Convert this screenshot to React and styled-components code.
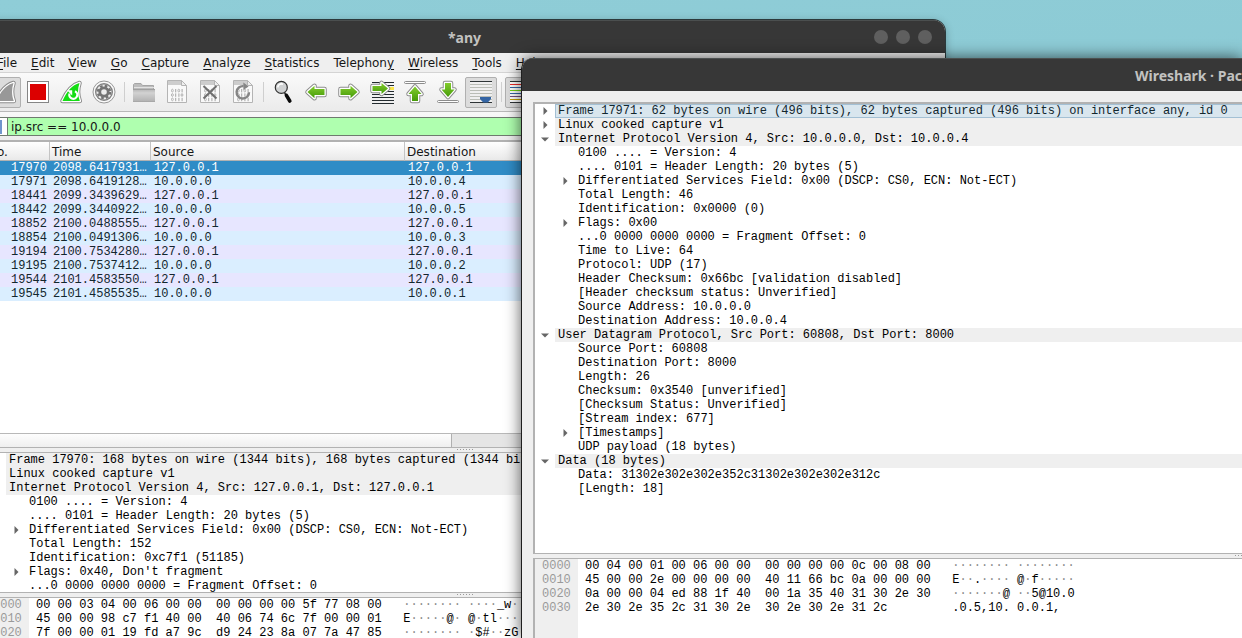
import React from "react";
import styled, { createGlobalStyle, css } from "styled-components";

const UI = `"DejaVu Sans", sans-serif`;
const MONO = `"Liberation Mono", monospace`;

const GlobalStyle = createGlobalStyle`
  * { box-sizing: border-box; }
  body { margin: 0; overflow: hidden; }
  button { font: inherit; color: inherit; margin: 0; padding: 0; border: 0; background: none; }
`;

const Desktop = styled.div`
  position: relative;
  height: 100vh;
  overflow: hidden;
  background: linear-gradient(175deg, #8fcdd7, #84c2ce);
  font: 12px/16px ${UI};
  color: #161616;
`;

const WindowFrame = styled.section`
  position: absolute;
  bottom: 0;
  display: flex;
  flex-direction: column;
  background: #efefef;
  overflow: hidden;
`;

const MainWindow = styled(WindowFrame)`
  top: 20px;
  left: -16px;
  right: 297px;
  border-radius: 12px 12px 0 0;
  box-shadow: 0 0 0 1px #2b3a3c, 0 2px 10px rgba(0, 0, 0, 0.3);
`;

const PacketWindow = styled(WindowFrame)`
  top: 58px;
  left: 521px;
  right: 0;
  border-left: 1px solid #1f1f1f;
  border-radius: 12px 0 0 0;
  box-shadow: 0 0 16px rgba(0, 0, 0, 0.65);
`;

const TitleBar = styled.header`
  position: relative;
  flex: none;
  display: flex;
  align-items: center;
  justify-content: ${(p) => (p.$end ? "flex-end" : "center")};
  height: 33px;
  padding-top: 2px;
  background: #373737;
  border-top: 1px solid #4b4f4f;
`;

const Title = styled.h1`
  margin: 0;
  font: 700 14px/20px "Noto Sans", sans-serif;
  color: #c2c2c0;
  white-space: nowrap;
`;

const WindowButtons = styled.div`
  position: absolute;
  right: 13px;
  top: 9px;
  display: flex;
  gap: 8px;
`;

const WindowButton = styled.button`
  width: 14px;
  height: 14px;
  border-radius: 50%;
  background: #5f5f5f;
`;

const MenuBar = styled.nav`
  flex: none;
  display: flex;
  height: 20px;
  padding-left: 6px;
  border-bottom: 1px solid #d4d4d4;
`;

const MenuItem = styled.button`
  height: 19px;
  padding: 0 7px;
  white-space: nowrap;

  u { text-underline-offset: 2px; }
`;

const Toolbar = styled.div`
  flex: none;
  display: flex;
  align-items: center;
  gap: 1px;
  height: 39px;
  padding-left: 5px;
  background: linear-gradient(#fafafa, #ebebeb);
  border-bottom: 1px solid #b8b8b8;
`;

const ToolButton = styled.button`
  flex: none;
  display: flex;
  align-items: center;
  justify-content: center;
  width: 32px;
  height: 31px;
  ${(p) =>
    p.$pressed &&
    css`
      background: #dcdcdc;
      border: 1px solid #b0b0b0;
      border-radius: 2px;
    `}
`;

const ToolSeparator = styled.span`
  flex: none;
  width: 6px;
  height: 20px;
  background: linear-gradient(#cfcfcf, #cfcfcf) center / 1px 100% no-repeat;
`;

const FilterBar = styled.div`
  flex: none;
  display: flex;
  height: 28px;
  padding: 5px 6px 4px 4px;
  background: linear-gradient(#f8f8f8, #ececec);
`;

const BookmarkButton = styled.button`
  flex: none;
  display: flex;
  align-items: center;
  justify-content: flex-end;
  width: 19px;
  padding-right: 5px;
  background: #fff;
  border: 1px solid #6f7a6f;
  border-right: 0;
`;

const FilterInput = styled.input`
  flex: 1;
  min-width: 0;
  padding: 0 3px;
  border: 1px solid #6f7a6f;
  border-radius: 0;
  outline: 0;
  background: #afffaf;
  font: 12px/16px ${UI};
  color: #161616;
`;

const Pane = styled.div`
  flex: ${(p) => (p.$height ? `0 0 ${p.$height}px` : "1 1 0")};
  min-height: 0;
  display: flex;
  flex-direction: column;
  overflow: hidden;
  background: #fff;
  border: solid #b2b2b2;
  border-width: ${(p) => p.$edge || "1px 0 1px 2px"};
`;

const PacketTable = styled.table`
  width: 100%;
  table-layout: fixed;
  border-collapse: separate;
  border-spacing: 0;
  font: 12px/14px ${MONO};
  color: #12272e;

  th {
    height: 19px;
    padding: 2px 2px 0;
    text-align: left;
    font: 12px/16px ${UI};
    color: #161616;
    background: linear-gradient(#fff, #e9e9e9);
    border-right: 1px solid #c4c4c4;
    border-bottom: 1px solid #b2b2b2;
  }
  td {
    height: 14px;
    padding: 0 3px;
    white-space: nowrap;
    overflow: hidden;
  }
  td:first-child { text-align: right; }
`;

const rowColors = {
  selected: "#308cc6",
  tcp: "#e7e6ff",
  udp: "#daeeff",
};

const PacketRow = styled.tr`
  background: ${(p) => rowColors[p.$kind]};
  color: ${(p) => (p.$kind === "selected" ? "#fff" : "inherit")};
`;

const ScrollTrack = styled.div`
  flex: none;
  margin-top: auto;
  height: 14px;
  background: #e5e5e5;
  border-top: 1px solid #b8b8b8;
`;

const ScrollThumb = styled.div`
  width: 466px;
  height: 100%;
  background: linear-gradient(#fdfdfd, #efefef);
  border-right: 1px solid #b0b0b0;
`;

const Splitter = styled.div`
  flex: none;
  display: flex;
  justify-content: ${(p) => (p.$end ? "flex-end" : "center")};
  height: 4px;
  padding-top: 1px;
  background: #efefef;

  &::after {
    content: "";
    width: ${(p) => (p.$end ? "7px" : "16px")};
    height: 1px;
    background: repeating-linear-gradient(90deg, #9a9a9a 0 1px, transparent 1px 3px);
  }
`;

const Tree = styled.div`
  flex: none;
  font: 12px/14px ${MONO};
  color: #000;
`;

const TreeRow = styled.div`
  display: flex;
  height: 14px;
  padding-left: ${(p) => (p.$level ? "20px" : "0")};
`;

const Toggle = styled.span`
  flex: none;
  display: flex;
  align-items: center;
  justify-content: center;
  width: 20px;

  button { display: flex; }
`;

const TreeLabel = styled.span`
  flex: 1;
  padding-left: 3px;
  white-space: pre;
  background: ${(p) => (p.$header ? "#efefef" : "none")};
  ${(p) =>
    p.$selected &&
    css`
      background: #d9e6ee;
      box-shadow: inset 1px 1px #a3c0d4, inset 0 -1px #a3c0d4;
      color: #12272e;
    `}
`;

const HexPane = styled.div`
  flex: 1;
  display: flex;
  font: 12px/14px ${MONO};
  color: #000;

  pre {
    margin: 0;
    font: inherit;
  }
`;

const Offsets = styled.pre`
  flex: none;
  width: 43px;
  padding-left: 7px;
  background: #efefef;
  color: #9a9a9a;
`;

const Bytes = styled.pre`
  padding-left: 7px;
`;

const Unprintable = styled.span`
  color: #8c8c8c;
`;

const PacketBody = styled.div`
  flex: 1;
  min-height: 0;
  display: flex;
  flex-direction: column;
  padding: 11px 0 0 11px;
`;

/* ---------- toolbar drawings ---------- */

const Icon = ({ children }) => (
  <svg width="24" height="24" viewBox="0 0 24 24" aria-hidden="true">
    {children}
  </svg>
);

const Outlined = ({ d, fill }) => (
  <>
    <path d={d} fill="#8c8c8c" stroke="#8c8c8c" strokeWidth="4.5" strokeLinejoin="round" />
    <path d={d} fill="#fff" stroke="#fff" strokeWidth="2.6" strokeLinejoin="round" />
    <path d={d} fill={fill} />
  </>
);

const Gradients = () => (
  <svg width="0" height="0" style={{ position: "absolute" }} aria-hidden="true">
    <defs>
      <linearGradient id="arrow" x1="0" y1="0" x2="0" y2="1">
        <stop offset="0" stopColor="#83cc2e" />
        <stop offset="1" stopColor="#459a08" />
      </linearGradient>
      <linearGradient id="folder" x1="0" y1="0" x2="0" y2="1">
        <stop offset="0" stopColor="#b4b4b4" />
        <stop offset="0.3" stopColor="#d2d2d2" />
        <stop offset="1" stopColor="#b0b0b0" />
      </linearGradient>
    </defs>
  </svg>
);

const FIN = "M3.5 21C8 11 13 5 20.5 3C18.5 9 18.5 15 20.8 21Z";

const FinIcon = () => <Icon><Outlined d={FIN} fill="#989898" /></Icon>;
const StopIcon = () => (
  <Icon>
    <rect x="1.5" y="1.5" width="21" height="21" fill="#fff" stroke="#858585" />
    <rect x="4" y="4" width="16" height="16" fill="#dc0000" />
  </Icon>
);
const RestartIcon = () => (
  <Icon>
    <Outlined d={FIN} fill="#14dd14" />
    <path d="M16 11.2a4 4 0 1 1-5.5 2.3" fill="none" stroke="#fff" strokeWidth="2.2" />
    <path d="M8 10.2h5.2v5.4z" fill="#fff" />
  </Icon>
);
const OptionsIcon = () => (
  <Icon>
    <circle cx="12" cy="12" r="11" fill="#fafafa" stroke="#979797" />
    <circle cx="12" cy="12" r="9" fill="#808080" />
    <circle cx="12" cy="12" r="7.6" fill="#ececec" />
    <circle cx="12" cy="12" r="6" fill="none" stroke="#747474" strokeWidth="2.6" strokeDasharray="2.6 2.112" />
    <circle cx="12" cy="12" r="4.2" fill="none" stroke="#747474" strokeWidth="2.8" />
  </Icon>
);
const FolderIcon = () => (
  <Icon>
    <path d="M1.5 10V4.5L2.5 3.5H9L10.5 5.5H21.5V10Z" fill="#bdbdbd" stroke="#a6a6a6" />
    <rect x="2" y="7" width="20" height="1" fill="#e2e2e2" />
    <rect x="1" y="9" width="22" height="13" fill="url(#folder)" />
    <rect x="1" y="9" width="22" height="1" fill="#a0a0a0" />
    <rect x="1" y="21" width="22" height="1" fill="#a8a8a8" />
  </Icon>
);
const BITS = ["0101", "0110", "0111"];
const Page = ({ children }) => (
  <Icon>
    <path d="M2.5 .5H16.5L21.5 5.5V22.5H2.5Z" fill="#f9f9f9" stroke="#b4b4b4" />
    <path d="M3 1H16V5H3Z" fill="#cdcdcd" />
    <path d="M16.5 .5V5.5H21.5Z" fill="#efefef" stroke="#b4b4b4" />
    {BITS.map((bits, row) =>
      [...bits].map((bit, col) =>
        bit === "0" ? (
          <ellipse key={`${row}${col}`} cx={7.4 + col * 3.2} cy={10.6 + row * 4.4} rx="0.9" ry="1.4" fill="none" stroke="#a4a4a4" strokeWidth="0.8" />
        ) : (
          <rect key={`${row}${col}`} x={7 + col * 3.2} y={9 + row * 4.4} width="1" height="3.4" fill="#a4a4a4" />
        )
      )
    )}
    {children}
  </Icon>
);
const SaveFileIcon = () => <Page />;
const CloseFileIcon = () => (
  <Page><path d="M5.5 6L18.5 18.5M18.5 6L5.5 18.5" stroke="#707070" strokeWidth="2.1" /></Page>
);
const ReloadIcon = () => (
  <Page>
    <path d="M18 12.2a6.2 6.2 0 1 1-5.4-6" fill="none" stroke="#858585" strokeWidth="2.4" />
    <path d="M12.4 2.4L17.6 6.4L12.4 10Z" fill="#858585" />
  </Page>
);
const FindIcon = () => (
  <Icon>
    <path d="M13.4 12.4L15 15" stroke="#303030" strokeWidth="1.6" />
    <path d="M15.4 15.4L18.8 21" stroke="#0a0a0a" strokeWidth="3.6" strokeLinecap="round" />
    <circle cx="10.3" cy="7.4" r="6" fill="#d0d2d3" stroke="#303030" strokeWidth="1.2" />
    <path d="M6.8 7.4A3.6 3.6 0 0 1 12 4.3" fill="none" stroke="#fff" strokeWidth="1.6" />
  </Icon>
);
const BackIcon = () => (
  <Icon><Outlined d="M3.5 12L10.5 5.8V9H20.5V15H10.5V18.2Z" fill="url(#arrow)" /></Icon>
);
const ForwardIcon = () => (
  <Icon><Outlined d="M20.5 12L13.5 5.8V9H3.5V15H13.5V18.2Z" fill="url(#arrow)" /></Icon>
);
const GoToIcon = () => (
  <Icon>
    <path d="M2 2.5H24M2 5.5H24M2 14.5H24M2 17.5H24M2 20.5H24M2 23.5H24M12 11.5H24" stroke="#232b2f" strokeWidth="1" />
    <rect x="17" y="7" width="7" height="3" fill="#fbe64a" />
    <Outlined d="M18 8.5L11.5 3V6H2.5V11H11.5V14Z" fill="url(#arrow)" />
  </Icon>
);
const FirstIcon = () => (
  <Icon>
    <rect x="1.5" y="1.5" width="21" height="2" rx="1" fill="#fff" stroke="#8c8c8c" />
    <Outlined d="M12 6.5L18.5 14H15V21H9V14H5.5Z" fill="url(#arrow)" />
  </Icon>
);
const LastIcon = () => (
  <Icon>
    <Outlined d="M12 17L18.5 9.5H15V3H9V9.5H5.5Z" fill="url(#arrow)" />
    <rect x="1.5" y="20.5" width="21" height="2" rx="1" fill="#fff" stroke="#8c8c8c" />
  </Icon>
);
const Lines = ({ colors }) =>
  colors.map((c, i) => <rect key={i} x="1" y={1 + i * 3} width="22" height="1" fill={c} />);
const AutoScrollIcon = () => (
  <Icon>
    <rect x="1" y="1" width="22" height="22" fill="#efefef" />
    <Lines colors={["#2e3436", "#babdb6", "#babdb6", "#babdb6", "#babdb6", "#babdb6", "#babdb6", "#2e3436"]} />
    <path d="M11 17H22V19L18.8 22.5H14.2L11 19Z" fill="#3465a4" />
  </Icon>
);
const ColorizeIcon = () => (
  <Icon>
    <rect x="1" y="1" width="22" height="22" fill="#fff" />
    <Lines colors={["#2e3436", "#ef2929", "#3465a4", "#73d216", "#3465a4", "#75507b", "#c4a000", "#2e3436"]} />
  </Icon>
);
const BookmarkIcon = () => (
  <svg width="10" height="14" viewBox="0 0 10 14" aria-hidden="true">
    <path d="M0 0H10V14H0Z" fill="#7096cc" />
  </svg>
);
const ClosedArrow = () => (
  <svg width="5" height="8" viewBox="0 0 5 8" aria-hidden="true"><path d="M.5 0L4.5 4L.5 8Z" fill="#666" /></svg>
);
const OpenArrow = () => (
  <svg width="8" height="5" viewBox="0 0 8 5" aria-hidden="true"><path d="M0 .5H8L4 4.5Z" fill="#666" /></svg>
);

/* ---------- data ---------- */

const menus = [
  ["", "F", "ile"], ["", "E", "dit"], ["", "V", "iew"], ["", "G", "o"], ["", "C", "apture"], ["", "A", "nalyze"],
  ["", "S", "tatistics"], ["Telephon", "y", ""], ["", "W", "ireless"], ["", "T", "ools"], ["", "H", "elp"],
];

const tools = [
  ["Start capture", FinIcon, true], ["Stop capture", StopIcon], ["Restart capture", RestartIcon], ["Capture options", OptionsIcon],
  null,
  ["Open file", FolderIcon], ["Save file", SaveFileIcon], ["Close file", CloseFileIcon], ["Reload file", ReloadIcon],
  null,
  ["Find packet", FindIcon], ["Previous packet", BackIcon], ["Next packet", ForwardIcon], ["Go to packet", GoToIcon],
  ["First packet", FirstIcon], ["Last packet", LastIcon], ["Auto scroll", AutoScrollIcon, true],
  null,
  ["Colorize", ColorizeIcon, true],
];

const packets = [
  ["selected", "17970", "2098.6417931…", "127.0.0.1", "127.0.0.1"],
  ["udp", "17971", "2098.6419128…", "10.0.0.0", "10.0.0.4"],
  ["tcp", "18441", "2099.3439629…", "127.0.0.1", "127.0.0.1"],
  ["udp", "18442", "2099.3440922…", "10.0.0.0", "10.0.0.5"],
  ["tcp", "18852", "2100.0488555…", "127.0.0.1", "127.0.0.1"],
  ["udp", "18854", "2100.0491306…", "10.0.0.0", "10.0.0.3"],
  ["tcp", "19194", "2100.7534280…", "127.0.0.1", "127.0.0.1"],
  ["udp", "19195", "2100.7537412…", "10.0.0.0", "10.0.0.2"],
  ["tcp", "19544", "2101.4583550…", "127.0.0.1", "127.0.0.1"],
  ["udp", "19545", "2101.4585535…", "10.0.0.0", "10.0.0.1"],
];

// Each row: level, toggle state, text, selected
const mainTree = [
  [0, "closed", "Frame 17970: 168 bytes on wire (1344 bits), 168 bytes captured (1344 bits)"],
  [0, "closed", "Linux cooked capture v1"],
  [0, "open", "Internet Protocol Version 4, Src: 127.0.0.1, Dst: 127.0.0.1"],
  [1, "", "0100 .... = Version: 4"],
  [1, "", ".... 0101 = Header Length: 20 bytes (5)"],
  [1, "closed", "Differentiated Services Field: 0x00 (DSCP: CS0, ECN: Not-ECT)"],
  [1, "", "Total Length: 152"],
  [1, "", "Identification: 0xc7f1 (51185)"],
  [1, "closed", "Flags: 0x40, Don't fragment"],
  [1, "", "...0 0000 0000 0000 = Fragment Offset: 0"],
];

const packetTree = [
  [0, "closed", "Frame 17971: 62 bytes on wire (496 bits), 62 bytes captured (496 bits) on interface any, id 0", true],
  [0, "closed", "Linux cooked capture v1"],
  [0, "open", "Internet Protocol Version 4, Src: 10.0.0.0, Dst: 10.0.0.4"],
  [1, "", "0100 .... = Version: 4"],
  [1, "", ".... 0101 = Header Length: 20 bytes (5)"],
  [1, "closed", "Differentiated Services Field: 0x00 (DSCP: CS0, ECN: Not-ECT)"],
  [1, "", "Total Length: 46"],
  [1, "", "Identification: 0x0000 (0)"],
  [1, "closed", "Flags: 0x00"],
  [1, "", "...0 0000 0000 0000 = Fragment Offset: 0"],
  [1, "", "Time to Live: 64"],
  [1, "", "Protocol: UDP (17)"],
  [1, "", "Header Checksum: 0x66bc [validation disabled]"],
  [1, "", "[Header checksum status: Unverified]"],
  [1, "", "Source Address: 10.0.0.0"],
  [1, "", "Destination Address: 10.0.0.4"],
  [0, "open", "User Datagram Protocol, Src Port: 60808, Dst Port: 8000"],
  [1, "", "Source Port: 60808"],
  [1, "", "Destination Port: 8000"],
  [1, "", "Length: 26"],
  [1, "", "Checksum: 0x3540 [unverified]"],
  [1, "", "[Checksum Status: Unverified]"],
  [1, "", "[Stream index: 677]"],
  [1, "closed", "[Timestamps]"],
  [1, "", "UDP payload (18 bytes)"],
  [0, "open", "Data (18 bytes)"],
  [1, "", "Data: 31302e302e302e352c31302e302e302e312c"],
  [1, "", "[Length: 18]"],
];

const mainHex = [
  ["0000", "00 00 03 04 00 06 00 00  00 00 00 00 5f 77 08 00", "········ ····_w··"],
  ["0010", "45 00 00 98 c7 f1 40 00  40 06 74 6c 7f 00 00 01", "E·····@· @·tl····"],
  ["0020", "7f 00 00 01 19 fd a7 9c  d9 24 23 8a 07 7a 47 85", "········ ·$#··zG·"],
];

const packetHex = [
  ["0000", "00 04 00 01 00 06 00 00  00 00 00 00 0c 00 08 00", "········ ········"],
  ["0010", "45 00 00 2e 00 00 00 00  40 11 66 bc 0a 00 00 00", "E··.···· @·f·····"],
  ["0020", "0a 00 00 04 ed 88 1f 40  00 1a 35 40 31 30 2e 30", "·······@ ··5@10.0"],
  ["0030", "2e 30 2e 35 2c 31 30 2e  30 2e 30 2e 31 2c", ".0.5,10. 0.0.1,"],
];

const DetailTree = ({ rows }) => (
  <Tree role="tree">
    {rows.map(([level, state, text, selected], i) => (
      <TreeRow key={i} role="treeitem" aria-level={level + 1} $level={level}>
        <Toggle>
          {state && (
            <button aria-label={state === "open" ? "Collapse" : "Expand"}>
              {state === "open" ? <OpenArrow /> : <ClosedArrow />}
            </button>
          )}
        </Toggle>
        <TreeLabel $header={level === 0} $selected={selected}>{text}</TreeLabel>
      </TreeRow>
    ))}
  </Tree>
);

const HexView = ({ rows }) => (
  <HexPane>
    <Offsets>{rows.map((r) => r[0]).join("\n")}</Offsets>
    <Bytes>
      {rows.map(([offset, bytes, ascii]) => (
        <React.Fragment key={offset}>
          {bytes.padEnd(51)}
          {ascii.split(/(·+)/).map((part, i) =>
            part.startsWith("·") ? <Unprintable key={i}>{part}</Unprintable> : part
          )}
          {"\n"}
        </React.Fragment>
      ))}
    </Bytes>
  </HexPane>
);

export default function App() {
  return (
    <Desktop>
      <GlobalStyle />
      <Gradients />
      <MainWindow>
        <TitleBar>
          <Title>*any</Title>
          <WindowButtons>
            <WindowButton aria-label="Minimize" />
            <WindowButton aria-label="Maximize" />
            <WindowButton aria-label="Close" />
          </WindowButtons>
        </TitleBar>
        <MenuBar>
          {menus.map(([before, key, after]) => (
            <MenuItem key={before + key}>{before}<u>{key}</u>{after}</MenuItem>
          ))}
        </MenuBar>
        <Toolbar>
          {tools.map((tool, i) => {
            if (!tool) return <ToolSeparator key={i} />;
            const [label, Drawing, pressed] = tool;
            return (
              <ToolButton key={i} aria-label={label} $pressed={pressed}><Drawing /></ToolButton>
            );
          })}
        </Toolbar>
        <FilterBar>
          <BookmarkButton aria-label="Bookmarks"><BookmarkIcon /></BookmarkButton>
          <FilterInput aria-label="Display filter" defaultValue="ip.src == 10.0.0.0" spellCheck={false} />
        </FilterBar>
        <Pane $height={308} $edge="2px 0 1px 2px">
          <PacketTable>
            <colgroup>
              <col width="64" />
              <col width="101" />
              <col width="254" />
              <col />
            </colgroup>
            <thead>
              <tr><th>No.</th><th>Time</th><th>Source</th><th>Destination</th></tr>
            </thead>
            <tbody>
              {packets.map(([kind, ...cells]) => (
                <PacketRow key={cells[0]} $kind={kind}>
                  {cells.map((c, i) => <td key={i}>{c}</td>)}
                </PacketRow>
              ))}
            </tbody>
          </PacketTable>
          <ScrollTrack><ScrollThumb /></ScrollTrack>
        </Pane>
        <Splitter />
        <Pane $height={141}><DetailTree rows={mainTree} /></Pane>
        <Splitter />
        <Pane $edge="1px 0 0 2px"><HexView rows={mainHex} /></Pane>
      </MainWindow>
      <PacketWindow>
        <TitleBar $end>
          <Title>Wireshark · Pac</Title>
        </TitleBar>
        <PacketBody>
          <Pane $height={452} $edge="2px 0 1px 2px"><DetailTree rows={packetTree} /></Pane>
          <Splitter $end />
          <Pane $edge="1px 0 0 2px"><HexView rows={packetHex} /></Pane>
        </PacketBody>
      </PacketWindow>
    </Desktop>
  );
}
